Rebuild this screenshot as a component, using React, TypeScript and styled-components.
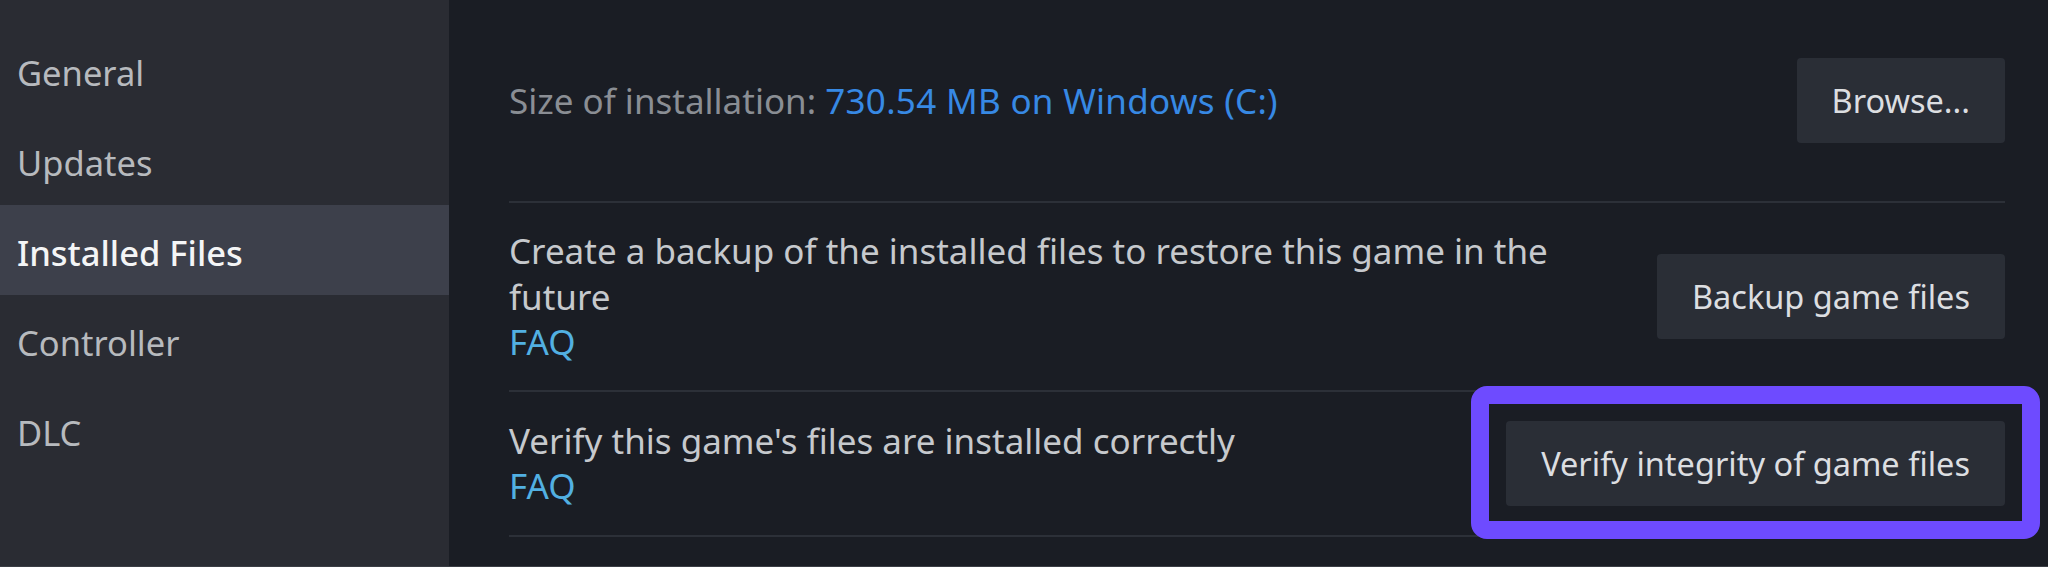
import styled, { createGlobalStyle } from 'styled-components'

const GlobalStyle = createGlobalStyle`
  html, body {
    margin: 0;
    padding: 0;
    background: #1a1d24;
  }
  * {
    box-sizing: border-box;
  }
`

const Frame = styled.div`
  display: flex;
  width: 2048px;
  height: 567px;
  overflow: hidden;
  font-family: 'Noto Sans', 'Open Sans', sans-serif;
  font-size: 35px;
  line-height: 45.5px;
  background: #1a1d24;
  border-bottom: 1px solid #3b3e45;
`

const Sidebar = styled.nav`
  display: flex;
  flex-direction: column;
  width: 449px;
  flex-shrink: 0;
  padding-top: 25px;
  background: #2a2c33;
  font-size: 34.5px;
`

const NavItem = styled.div<{ $active?: boolean }>`
  display: flex;
  align-items: center;
  height: 90px;
  padding: 5px 0 0 17px;
  color: ${(p) => (p.$active ? '#f4f5f6' : '#b7babe')};
  background: ${(p) => (p.$active ? '#3d404b' : 'transparent')};
  font-weight: ${(p) => (p.$active ? 500 : 400)};
`

const Content = styled.main`
  display: flex;
  flex-direction: column;
  flex: 1;
  padding: 0 43px 0 60px;
`

const Row = styled.section<{ $pad: string }>`
  display: flex;
  align-items: center;
  gap: 60px;
  padding: ${(p) => p.$pad};
  border-bottom: 2px solid #2c3038;
`

const Text = styled.div`
  flex: 1;
  color: #c6c9cd;
`

const Muted = styled.span`
  color: #8a8e94;
`

const Value = styled.span`
  color: #3789e4;
  letter-spacing: 0.3px;
`

const Faq = styled.a`
  display: block;
  color: #52b0e2;
  text-decoration: none;
  cursor: pointer;
`

const ButtonWrap = styled.div`
  position: relative;
  flex-shrink: 0;
`

const Button = styled.button`
  display: block;
  height: 85px;
  padding: 0 35px;
  border: none;
  border-radius: 4px;
  background: #2a2e36;
  color: #dcdee1;
  font-family: inherit;
  font-size: 32.5px;
  cursor: pointer;
`

const Highlight = styled.div`
  position: absolute;
  inset: -35px -35px -33px -35px;
  border: 18px solid #6e4bff;
  border-radius: 16px;
  pointer-events: none;
`

const navItems = ['General', 'Updates', 'Installed Files', 'Controller', 'DLC']

const App = () => {
  return (
    <>
      <GlobalStyle />
      <Frame>
        <Sidebar>
          {navItems.map((item) => (
            <NavItem key={item} $active={item === 'Installed Files'}>
              {item}
            </NavItem>
          ))}
        </Sidebar>
        <Content>
          <Row $pad="58px 0">
            <Text>
              <Muted>Size of installation: </Muted>
              <Value>730.54 MB on Windows (C:)</Value>
            </Text>
            <ButtonWrap>
              <Button type="button">Browse...</Button>
            </ButtonWrap>
          </Row>
          <Row $pad="25px 0">
            <Text>
              Create a backup of the installed files to restore this game in
              the future
              <Faq>FAQ</Faq>
            </Text>
            <ButtonWrap>
              <Button type="button">Backup game files</Button>
            </ButtonWrap>
          </Row>
          <Row $pad="26px 0">
            <Text>
              Verify this game's files are installed correctly
              <Faq>FAQ</Faq>
            </Text>
            <ButtonWrap>
              <Button type="button">Verify integrity of game files</Button>
              <Highlight />
            </ButtonWrap>
          </Row>
        </Content>
      </Frame>
    </>
  )
}

export default App
